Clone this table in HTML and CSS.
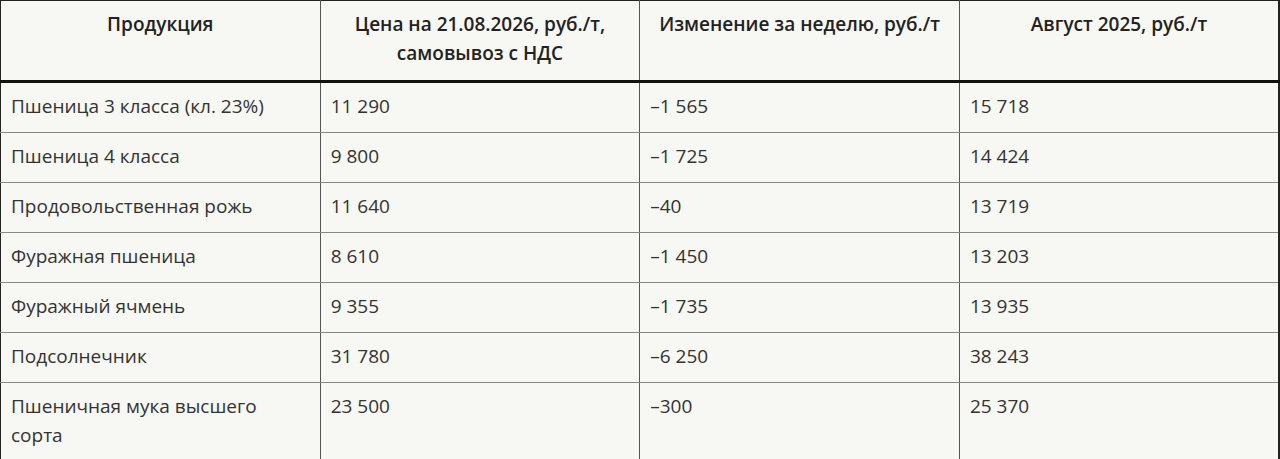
FILE: index.html
```html
<!DOCTYPE html>
<html lang="ru">
<head>
<meta charset="utf-8">
<link rel="stylesheet" href="styles.css">
</head>
<body>
<table class="prices">
  <thead>
    <tr>
      <th>Продукция</th>
      <th>Цена на 21.08.2026, руб./т,<br>самовывоз с НДС</th>
      <th>Изменение за неделю, руб./т</th>
      <th>Август 2025, руб./т</th>
    </tr>
  </thead>
  <tbody>
    <tr><td>Пшеница 3 класса (кл. 23%)</td><td>11 290</td><td>–1 565</td><td>15 718</td></tr>
    <tr><td>Пшеница 4 класса</td><td>9 800</td><td>–1 725</td><td>14 424</td></tr>
    <tr><td>Продовольственная рожь</td><td>11 640</td><td>–40</td><td>13 719</td></tr>
    <tr><td>Фуражная пшеница</td><td>8 610</td><td>–1 450</td><td>13 203</td></tr>
    <tr><td>Фуражный ячмень</td><td>9 355</td><td>–1 735</td><td>13 935</td></tr>
    <tr><td>Подсолнечник</td><td>31 780</td><td>–6 250</td><td>38 243</td></tr>
    <tr class="last"><td>Пшеничная мука высшего<br>сорта</td><td>23 500</td><td>–300</td><td>25 370</td></tr>
  </tbody>
</table>
</body>
</html>
```

FILE: styles.css
```css
html, body {
  margin: 0;
  padding: 0;
  background: #f7f7f3;
}
.prices {
  width: 1280px;
  border-collapse: collapse;
  table-layout: fixed;
  font-family: "Open Sans", Lato, sans-serif;
  font-size: 19px;
  line-height: 29px;
  color: #333;
  background: #f7f7f3;
  border-top: 1px solid #222;
  border-left: 1px solid #222;
  border-right: 2px solid #222;
}
.prices th {
  font-weight: 600;
  color: #222;
  text-align: center;
  vertical-align: top;
  padding: 9px 10px 11px;
  height: 59px;
  border-left: 1px solid #555;
  border-bottom: 3px solid #111;
}
.prices td {
  text-align: left;
  vertical-align: top;
  padding: 9px 10px 11px;
  border-left: 1px solid #555;
  border-bottom: 1px solid #888;
}
.prices tr.last td {
  padding-bottom: 20px;
}
.prices th:first-child, .prices td:first-child {
  border-left: none;
}
```
